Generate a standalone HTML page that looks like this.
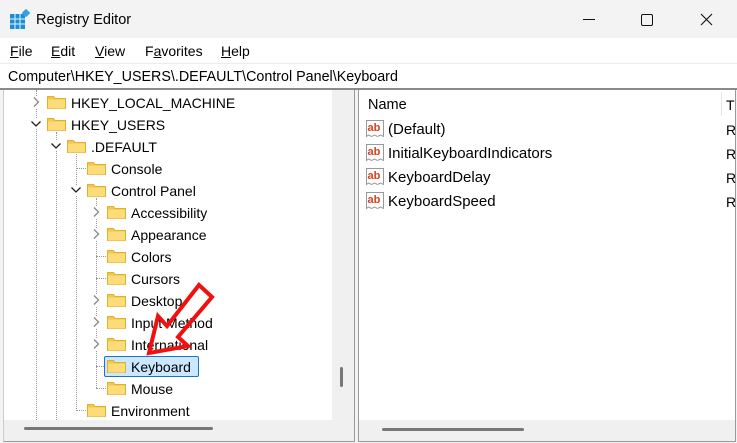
<!DOCTYPE html>
<html><head><style>
*{margin:0;padding:0;box-sizing:border-box}
body{width:737px;height:443px;overflow:hidden;background:#f3f3f3;font-family:"Liberation Sans",sans-serif;font-size:14px;color:#000;position:relative}
.a{position:absolute;white-space:nowrap}
.t{line-height:16px}
.fold{position:absolute;width:19px;height:14px}
.vl{position:absolute;width:0;border-left:1px dotted #999}
.hl{position:absolute;height:0;border-top:1px dotted #999}
u{text-decoration:underline}
</style></head><body>
<svg class="a" style="left:9px;top:9px" width="22" height="22" viewBox="0 0 22 22">
<rect x="1" y="5" width="15" height="15" fill="#1a8fd6"/>
<g stroke="#e8f4fc" stroke-width="1"><line x1="6" y1="5" x2="6" y2="20"/><line x1="11" y1="5" x2="11" y2="20"/><line x1="1" y1="10" x2="16" y2="10"/><line x1="1" y1="15" x2="16" y2="15"/></g>
<rect x="14" y="1" width="6" height="6" fill="#3aa0e0" transform="rotate(45 17 4)"/>
</svg>
<div class="a t" style="left:36px;top:12px;font-size:14.5px">Registry Editor</div>
<svg class="a" style="left:580px;top:10px" width="150" height="20">
<line x1="3" y1="9.5" x2="15" y2="9.5" stroke="#111"/>
<rect x="61.5" y="4.5" width="11" height="11" rx="1.5" fill="none" stroke="#111"/>
<path d="M121 4 L132 15 M132 4 L121 15" stroke="#111" stroke-width="1.1"/>
</svg>
<div class="a" style="left:0;top:38px;width:737px;height:25px;background:#fff"></div>
<div class="a t" style="left:10px;top:43px"><u>F</u>ile</div>
<div class="a t" style="left:51px;top:43px"><u>E</u>dit</div>
<div class="a t" style="left:95px;top:43px"><u>V</u>iew</div>
<div class="a t" style="left:145px;top:43px">F<u>a</u>vorites</div>
<div class="a t" style="left:221px;top:43px"><u>H</u>elp</div>
<div class="a" style="left:0;top:63px;width:737px;height:1px;background:#ececec"></div>
<div class="a" style="left:0;top:64px;width:737px;height:24px;background:#fff"></div>
<div class="a t" style="left:8px;top:69px;font-size:14.3px">Computer\HKEY_USERS\.DEFAULT\Control Panel\Keyboard</div>
<div class="a" style="left:0;top:88px;width:737px;height:2px;background:#8a8a8a"></div>
<div class="a" style="left:3px;top:90px;width:352px;height:352px;background:#f0f0f0;border-right:1px solid #999;border-left:1px solid #ccc;border-bottom:1px solid #999"></div>
<div class="a" style="left:4px;top:90px;width:328px;height:330px;background:#fff"></div>
<div class="a" style="left:340px;top:367px;width:3px;height:20px;background:#777;border-radius:2px"></div>
<div class="a" style="left:24px;top:427px;width:189px;height:3px;background:#777;border-radius:2px"></div>
<div class="a" style="left:358px;top:90px;width:378px;height:352px;background:#f0f0f0;border-left:1px solid #999;border-bottom:1px solid #999;border-right:1px solid #999"></div>
<div class="a" style="left:359px;top:90px;width:376px;height:330px;background:#fff"></div>
<div class="a" style="left:382px;top:428px;width:142px;height:3px;background:#777;border-radius:2px"></div>
<div class="a" style="left:721px;top:92px;width:1px;height:24px;background:#e5e5e5"></div>
<div class="a t" style="left:368px;top:97px;font-size:14.5px">Name</div>
<div class="a t" style="left:726px;top:97px">T</div>
<div id="rv"></div>
<div id="tree"></div>
<svg class="a" style="left:0;top:0" width="737" height="443">
<polygon points="149,353 158,316 167,326 199,285 212,297 178,337 188,346" fill="none" stroke="#f01010" stroke-width="4" stroke-linejoin="miter"/>
</svg>
<script>
var tree=document.getElementById('tree'),h='';
function folder(x,y){return '<svg class="fold" style="left:'+x+'px;top:'+(y-7)+'px" viewBox="0 0 19 14"><path d="M0.5 1.5h6l1.5 2h10.5v10h-18z" fill="#f3c848" stroke="#e0b030"/><rect x="1" y="4.5" width="17" height="9" fill="#fcdc78"/></svg>';}
h+='<div class="vl" style="left:36px;top:90px;height:330px"></div>';
h+='<div class="vl" style="left:56px;top:132px;height:288px"></div>';
h+='<div class="vl" style="left:76px;top:154px;height:257px"></div>';
h+='<div class="vl" style="left:96px;top:198px;height:190px"></div>';
var rows=[[0,'HKEY_LOCAL_MACHINE',1],[0,'HKEY_USERS',2],[1,'.DEFAULT',2],[2,'Console',0],[2,'Control Panel',2],[3,'Accessibility',1],[3,'Appearance',1],[3,'Colors',0],[3,'Cursors',0],[3,'Desktop',1],[3,'Input Method',1],[3,'International',1],[3,'Keyboard',0],[3,'Mouse',0],[2,'Environment',0]];
rows.forEach(function(r,i){var y=102+22*i,lv=r[0],fx=47+20*lv,tx=71+20*lv,cx=36+20*lv-4;
 if(r[2]==0){h+='<div class="hl" style="left:'+(fx-11)+'px;top:'+y+'px;width:10px"></div>';}
 else if(r[2]==1){h+='<svg class="a" style="left:'+(cx-1)+'px;top:'+(y-6)+'px;background:#fff" width="10" height="12"><path d="M3 1.5l4.5 4.5-4.5 4.5" fill="none" stroke="#888" stroke-width="1.3"/></svg>';}
 else {h+='<svg class="a" style="left:'+(cx-2)+'px;top:'+(y-5)+'px;background:#fff" width="12" height="10"><path d="M1.5 2.5l4.5 4.5 4.5-4.5" fill="none" stroke="#222" stroke-width="1.3"/></svg>';}
 if(r[1]=='Keyboard'){h+='<div class="a" style="left:104px;top:356px;width:95px;height:21px;background:#cce8ff;border:1px solid #1a73c8;border-radius:2px"></div>';}
 h+=folder(fx,y);
 h+='<div class="a t" style="left:'+tx+'px;top:'+(y-7)+'px;font-size:14px">'+r[1]+'</div>';
});
tree.innerHTML=h;
var rv='',names=['(Default)','InitialKeyboardIndicators','KeyboardDelay','KeyboardSpeed'];
names.forEach(function(n,i){var y=129+24*i;
 rv+='<svg class="a" style="left:365px;top:'+(y-10)+'px" width="20" height="20"><path d="M1.5 1.5h17v16l-3-1.5-3 1.5-3-1.5-3 1.5-3-1.5-2 1.5z" fill="#fff" stroke="#999"/><text x="2.5" y="12" font-family="Liberation Sans" font-weight="bold" font-size="11" fill="#d04020">ab</text></svg>';
 rv+='<div class="a t" style="left:388px;top:'+(y-7)+'px;font-size:15px">'+n+'</div><div class="a t" style="left:726px;top:'+(y-7)+'px">R</div>';
});
document.getElementById('rv').innerHTML=rv;
</script>
</body></html>
